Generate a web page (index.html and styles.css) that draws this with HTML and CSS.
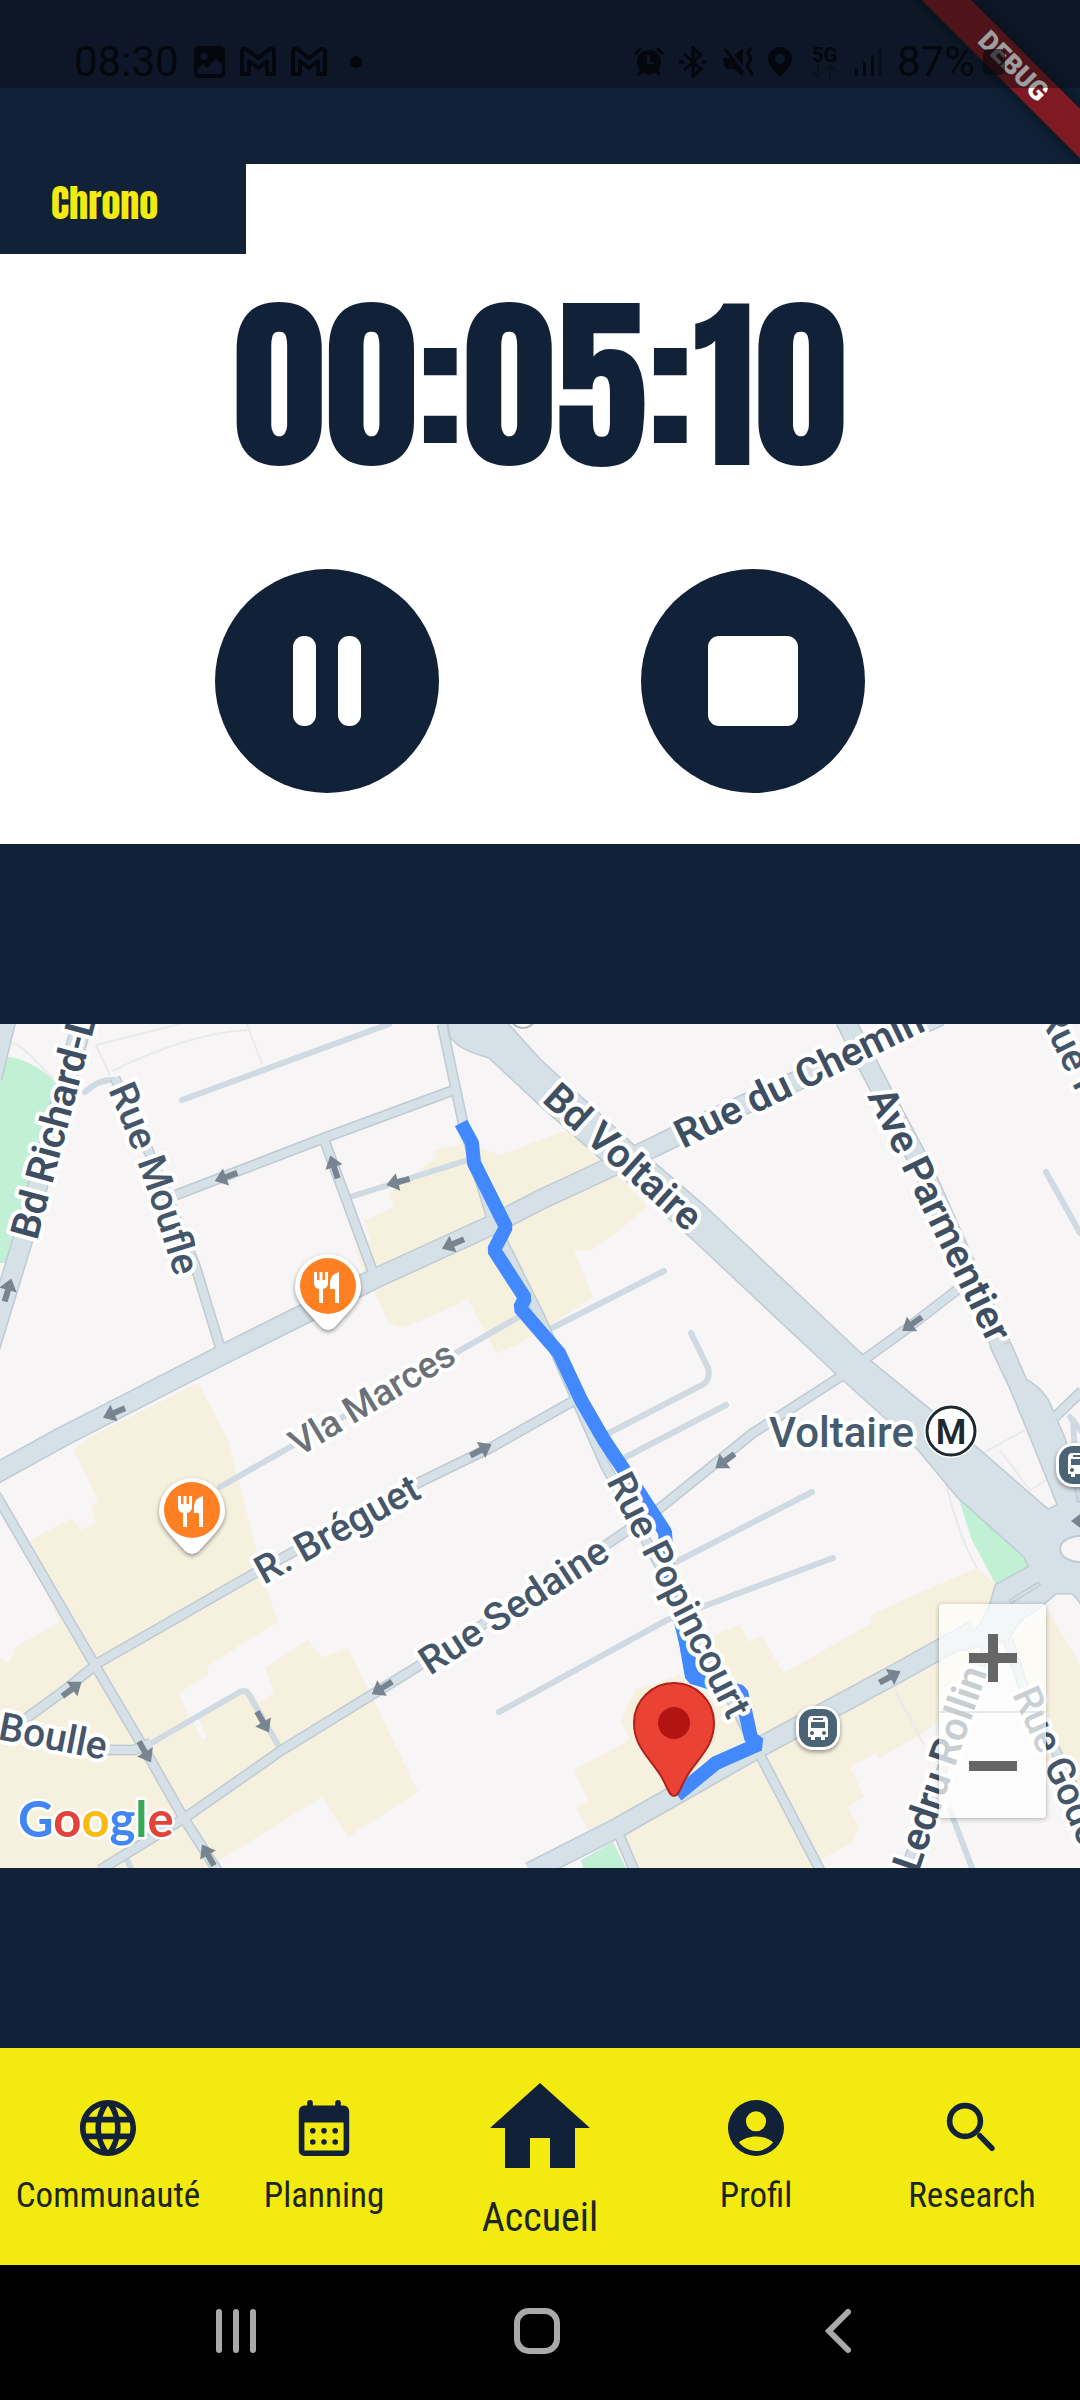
FILE: index.html
```html
<!DOCTYPE html>
<html lang="fr">
<head>
<meta charset="utf-8">
<meta name="viewport" content="width=device-width, initial-scale=1">
<title>Chrono</title>
<link rel="stylesheet" href="styles.css">
</head>
<body>
<header class="top">
  <div class="ribbon">DEBUG</div>
  <div class="status">
    <div class="status-left">
      <time>08:30</time>
      <svg width="31" height="32" viewBox="0 0 31 32"><path fill-rule="evenodd" d="M5 0h21a5 5 0 0 1 5 5v22a5 5 0 0 1-5 5H5a5 5 0 0 1-5-5V5a5 5 0 0 1 5-5zM10 7a3.500 3.500 0 1 0 .01 0zM3 24v2q0 2 2 2h21q2 0 2-2v-7l-6-6-9 9-4-4z"/></svg>
      <svg class="mail" width="36" height="30" viewBox="0 0 36 30"><path d="M2 5q0-4 4-3l12 9 12-9q4-1 4 3v22h-7V14l-9 7-9-7v13H2z"/></svg>
      <svg class="mail" width="36" height="30" viewBox="0 0 36 30"><path d="M2 5q0-4 4-3l12 9 12-9q4-1 4 3v22h-7V14l-9 7-9-7v13H2z"/></svg>
      <span class="dot"></span>
    </div>
    <div class="status-right">
      <svg width="30" height="30" viewBox="0 0 30 30"><path fill-rule="evenodd" d="M15 3a12 12 0 0 1 9 20l3 4-2 2-4-3a12 12 0 0 1-12 0l-4 3-2-2 3-4A12 12 0 0 1 15 3zM13 8v9h7v-2h-4V8z"/><path d="M1 7l6-6M23 1l6 6" stroke="#04080e" stroke-width="3"/></svg>
      <svg width="28" height="32" viewBox="0 0 28 32"><path fill="none" stroke="#04080e" stroke-width="3" d="M5 8l17 15-8 7V2l8 7L5 24M0 16h5M23 16h5"/></svg>
      <svg width="31" height="30" viewBox="0 0 31 30"><path d="M1 11h8l12 13v6l-9-8H5q-4-3-4-11zM12 8l9-7v18z"/><path fill="none" stroke="#04080e" stroke-width="3" d="M3 2l18 24M30 1q-6 4-3 7t0 7 0 7 3 7"/></svg>
      <svg width="24" height="30" viewBox="0 0 24 30"><path fill-rule="evenodd" d="M12 0a12 12 0 0 1 12 12c0 8-12 18-12 18S0 20 0 12A12 12 0 0 1 12 0zm0 7a5 5 0 1 0 .01 0z"/></svg>
      <span class="network">5G<svg width="24" height="14" viewBox="0 0 24 14"><path fill="none" stroke="#09111c" stroke-width="2" d="M6 0v12M1 7l5 6 5-6M18 14V2M13 7l5-6 5 6"/></svg></span>
      <svg width="27" height="28" viewBox="0 0 27 28"><path d="M0 21h3v7H0zM8 14h3v14H8zM16 7h3v21h-3z"/><path opacity=".4" d="M23 0h4v28h-4z"/></svg>
      <span class="battery">87%<svg width="22" height="26" viewBox="0 0 22 26"><rect width="22" height="26" rx="5" opacity=".6"/></svg></span>
    </div>
  </div>
</header>

<main>
  <section class="chrono">
    <h1 class="tab">Chrono</h1>
    <p class="timer">00:05:10</p>
    <div class="controls">
      <button class="round" type="button" aria-label="Pause"><svg width="68" height="90" viewBox="0 0 68 90"><rect width="23" height="90" rx="11"/><rect x="45" width="23" height="90" rx="11"/></svg></button>
      <button class="round" type="button" aria-label="Stop"><svg width="90" height="90" viewBox="0 0 90 90"><rect width="90" height="90" rx="11"/></svg></button>
    </div>
  </section>

  <section class="map" aria-label="Carte">
    <svg class="map-art" viewBox="0 1024 1080 844" preserveAspectRatio="xMidYMid slice">
      <defs>
        <path id="arrow" d="M-12-3H0V-9L12 0 0 9V3H-12z"/>
        <g id="food">
          <path class="pin-shadow" d="M-33 1A33 33 0 1 1 33 1C33 14 24 22 7 41Q0 47-7 41C-24 22-33 14-33 1z"/>
          <circle r="28" fill="#ff8022"/>
          <path fill="#fff" d="M-14-14h3v8h2.500v-8h3v8H-3v-8h3v11q0 5-5 6v14h-4V3q-5-1-5-6zM11-14V17H7V3H2V-4Q3-12 11-14z"/>
        </g>
        <g id="bus">
          <rect x="-22" y="-22" width="44" height="44" rx="17" class="pin-shadow"/>
          <rect x="-19" y="-19" width="38" height="38" rx="14" fill="#4a6375"/>
          <path fill="#fff" fill-rule="evenodd" d="M-6-12H6q4 0 4 5V9H7v3H3V9H-3v3H-7V9h-3V-7q0-5 4-5zM-7-6V0H7V-6zM-6 3a2 2 0 1 0 .01 0zM6 3a2 2 0 1 0 .01 0zM-5-10v2H5v-2z"/>
        </g>
        <path id="p-moufle" d="M108 1090Q142 1165 177 1285"/>
      </defs>
      <rect y="1024" width="1080" height="844" fill="#f7f5f6"/>

      <g fill="#f6f0de">
        <path d="M365 1220L394 1207 389 1193 437 1157 434 1150 465 1143 500 1155 540 1140 568 1130 602 1157 647 1207 620 1230 592 1250 574 1250 593 1297 550 1325 517 1345 496 1353 468 1300 403 1328 389 1323 375 1293 365 1278 356 1250 370 1240z"/>
        <path d="M198 1383L228 1440 275 1622 207 1667 208 1675 179 1693 189 1718 248 1687 260 1703 274 1692 265 1668 308 1640 322 1658 348 1648 418 1792 348 1837 322 1797 220 1860 222 1868H0V1658L10 1663 15 1647 59 1623 31 1540 72 1518 81 1530 96 1523 91 1507 98 1500 74 1450 90 1437z"/>
        <path d="M977 1568L996 1585 991 1603 982 1622 760 1750 588 1830 576 1808 588 1800 573 1770 621 1745 630 1738 621 1722 635 1690 680 1675 715 1700 709 1637 740 1625 748 1642 762 1637 784 1673 872 1623 871 1615 919 1593z"/>
        <path d="M623 1835L762 1755 1000 1632 975 1690 924 1733 879 1758 876 1753 850 1767 864 1797 848 1807 859 1827 853 1842 826 1857 810 1868H636z"/>
        <path d="M1050 1613L1080 1665V1808L1040 1760 1008 1650 1020 1630z"/>
      </g>
      <path fill="#f7f5f6" d="M193 1722l5-3 9 18-5 3z"/>
      <path fill="#f6f0de" d="M198 1383L278 1622 200 1668 90 1440z"/>
      <g fill="#c2f0d5">
        <path d="M0 1057Q25 1054 57 1083L8 1263H0z"/>
        <path d="M958 1497L1025 1557 1029 1567 996 1585 972 1540z"/>
        <path d="M581 1860L613 1842 626 1868H583z"/>
      </g>
      <g class="hair">
        <path d="M0 1042Q15 1038 35 1060L57 1083M96 1045L180 1024M96 1045L110 1075M112 1071Q190 1033 247 1030M247 1024L262 1064M941 1460Q955 1530 977 1568M895 1690L924 1745M985 1452L1025 1430M1000 1450L1030 1490 1055 1475"/>
      </g>

      <g class="alley">
        <path d="M182 1100L389 1024M85 1092Q100 1078 117 1080M350 1197L468 1160M517 1318L220 1487M148 1745L240 1692Q247 1688 252 1700L281 1750M499 1712L667 1620 833 1558M674 1563L812 1492M726 1405L626 1457M691 1333L708 1368Q711 1380 702 1385L609 1433M664 1271L552 1328M1046 1172L1080 1233M950 1810L972 1868M127 1860L131 1868M1070 1417L1082 1432M1073 1420L1078 1506"/>
      </g>
      <g class="road edge">
        <path class="w20" d="M-12 1354L24 1236 82 1024M-8 1078L6 1020"/>
        <path class="w10" d="M115 1078L147 1147 195 1265 221 1350M176 1195L324 1138 454 1090M325 1142L374 1275M442 1024L463 1123 492 1220 540 1317 605 1465 700 1640 760 1755 820 1870M617 1830L634 1870M-4 1495L96 1667 145 1750 183 1817 217 1870M-4 1740L28 1717 65 1690 98 1663 255 1573 420 1482 492 1447 575 1400M107 1750H134L151 1743M957 1290L905 1330 840 1377 753 1433 660 1508 609 1543 417 1667 282 1750 186 1817 100 1870M1055 1417L1082 1391M1008 1640L1022 1683 1080 1800M905 1870L990 1640"/>
        <path class="w20" d="M-5 1474L62 1437 220 1356 374 1279 492 1225 540 1200 654 1147 688 1130 940 1016M975 1630L890 1677 760 1747 619 1827 530 1872M845 1020L881 1090 922 1167 1001 1345"/>
        <path class="shape" d="M448 1020H504L540 1060 633 1145 705 1207 860 1353 979 1450 1048 1510 1058 1505 1029 1433 1010 1387 991 1347 1010 1343 1026 1380Q1045 1390 1052 1410L1065 1440 1077 1503H1090V1610L1080 1602Q1074 1593 1070 1593H1056L1036 1610Q1016 1620 1008 1640L960 1650 982 1622 991 1603 996 1585 1029 1567 1025 1557 958 1497 919 1450 888 1420 836 1373 691 1237 537 1102 489 1057Q460 1050 451 1037z"/>
      </g>
      <g class="road fill">
        <path class="w18" d="M-12 1354L24 1236 82 1024M-8 1078L6 1020"/>
        <path class="w8" d="M115 1078L147 1147 195 1265 221 1350M176 1195L324 1138 454 1090M325 1142L374 1275M442 1024L463 1123 492 1220 540 1317 605 1465 700 1640 760 1755 820 1870M617 1830L634 1870M-4 1495L96 1667 145 1750 183 1817 217 1870M-4 1740L28 1717 65 1690 98 1663 255 1573 420 1482 492 1447 575 1400M107 1750H134L151 1743M957 1290L905 1330 840 1377 753 1433 660 1508 609 1543 417 1667 282 1750 186 1817 100 1870M1055 1417L1082 1391M1008 1640L1022 1683 1080 1800M905 1870L990 1640"/>
        <path class="w18" d="M-5 1474L62 1437 220 1356 374 1279 492 1225 540 1200 654 1147 688 1130 940 1016M975 1630L890 1677 760 1747 619 1827 530 1872M845 1020L881 1090 922 1167 1001 1345"/>
        <path class="shape" d="M448 1020H504L540 1060 633 1145 705 1207 860 1353 979 1450 1048 1510 1058 1505 1029 1433 1010 1387 991 1347 1010 1343 1026 1380Q1045 1390 1052 1410L1065 1440 1077 1503H1090V1610L1080 1602Q1074 1593 1070 1593H1056L1036 1610Q1016 1620 1008 1640L960 1650 982 1622 991 1603 996 1585 1029 1567 1025 1557 958 1497 919 1450 888 1420 836 1373 691 1237 537 1102 489 1057Q460 1050 451 1037z"/>
      </g>
      <ellipse cx="1080" cy="1549" rx="20" ry="13" fill="#f7f5f6" stroke="#bfcbd4" stroke-width="2"/>
      <path d="M1010 1602L1040 1583" stroke="#bfcbd4" stroke-width="5"/><path d="M1011 1601L1039 1584" stroke="#d6e0e7" stroke-width="2"/>
      <circle cx="523" cy="1015" r="13" fill="#fff" stroke="#b8bcc0" stroke-width="2"/>

      <g fill="#78848f">
        <use href="#arrow" transform="translate(226 1177) rotate(160)"/><use href="#arrow" transform="translate(334 1167) rotate(-108)"/>
        <use href="#arrow" transform="translate(398 1182) rotate(165)"/><use href="#arrow" transform="translate(453 1244) rotate(157)"/>
        <use href="#arrow" transform="translate(114 1413) rotate(157)"/><use href="#arrow" transform="translate(8 1290) rotate(-74)"/>
        <use href="#arrow" transform="translate(912 1324) rotate(145)"/><use href="#arrow" transform="translate(725 1461) rotate(143)"/>
        <use href="#arrow" transform="translate(481 1450) rotate(-28)"/><use href="#arrow" transform="translate(382 1688) rotate(148)"/>
        <use href="#arrow" transform="translate(72 1689) rotate(-37)"/><use href="#arrow" transform="translate(263 1722) rotate(60)"/>
        <use href="#arrow" transform="translate(145 1752) rotate(60)"/><use href="#arrow" transform="translate(208 1855) rotate(-120)"/>
        <use href="#arrow" transform="translate(890 1677) rotate(-28)"/><use href="#arrow" transform="translate(1083 1521) rotate(180)"/>
      </g>

      <path class="route" d="M461 1123L472 1143 474 1163 506 1227 494 1250 525 1298 520 1308 559 1353 581 1400 604 1440 642 1497 665 1532 667 1563 686 1643 692 1677 741 1692 751 1738 759 1744 716 1763 677 1795"/>

      <g class="labels">
        <text class="major" transform="translate(37 1241) rotate(-75)">Bd Richard-L</text>
        <text><textPath href="#p-moufle">Rue Moufle</textPath></text>
        <text class="minor" transform="translate(299 1457) rotate(-31)">Vla Marces</text>
        <text transform="translate(264 1585) rotate(-29)">R. Bréguet</text>
        <text transform="translate(430 1676) rotate(-33)">Rue Sedaine</text>
        <text transform="translate(-3 1739) rotate(11)">Boulle</text>
        <text transform="translate(606 1481) rotate(63)">Rue Popincourt</text>
        <text class="major" transform="translate(541 1101) rotate(42)">Bd Voltaire</text>
        <text class="major" transform="translate(683 1149) rotate(-26)">Rue du Chemin</text>
        <text class="major" transform="translate(867 1096) rotate(64)">Ave Parmentier</text>
        <text transform="translate(1038 1014) rotate(64)">Rue F</text>
        <text class="major" transform="translate(918 1874) rotate(-71)">Ledru Rollin</text>
        <text transform="translate(1012 1694) rotate(66)">Rue Gode</text>
        <text class="station" x="769" y="1447">Voltaire</text>
      </g>
      <circle cx="951" cy="1431" r="27" fill="#fff"/><circle cx="951" cy="1431" r="24" fill="#fff" stroke="#20292f" stroke-width="3"/>
      <text class="metro" x="951" y="1444">M</text>
      <use href="#food" x="328" y="1286"/><use href="#food" x="192" y="1510"/>
      <use href="#bus" x="818" y="1728"/><use href="#bus" x="1078" y="1465"/>
      <path fill="#ea4335" stroke="#b3201a" stroke-width="2" d="M634 1723A40 40 0 0 1 714 1723C714 1747 698 1758 687 1776 681 1786 679 1796 674 1796S667 1786 661 1776C650 1758 634 1747 634 1723z"/>
      <circle cx="674" cy="1723" r="16" fill="#b31412"/>
      <text class="google" x="18" y="1837"><tspan fill="#4285f4">G</tspan><tspan fill="#e2443a">o</tspan><tspan fill="#f7bb14">o</tspan><tspan fill="#4285f4">g</tspan><tspan fill="#3aa757">l</tspan><tspan fill="#e2443a">e</tspan></text>
    </svg>
    <div class="zoom">
      <button type="button" aria-label="Zoom avant"><svg width="48" height="48" viewBox="0 0 48 48"><path d="M19 0h10v19h19v10H29v19H19V29H0V19h19z"/></svg></button>
      <button type="button" aria-label="Zoom arrière"><svg width="48" height="48" viewBox="0 0 48 48"><path d="M0 19h48v10H0z"/></svg></button>
    </div>
  </section>
</main>

<nav class="tabs">
  <a href="#communaute"><svg width="56" height="56" viewBox="2 2 20 20"><path d="M11.990 2C6.470 2 2 6.480 2 12s4.470 10 9.990 10C17.520 22 22 17.520 22 12S17.520 2 11.990 2zm6.930 6h-2.950c-.32-1.250-.78-2.450-1.380-3.560 1.840.63 3.370 1.910 4.330 3.560zM12 4.040c.83 1.200 1.480 2.530 1.910 3.960h-3.820c.43-1.430 1.080-2.760 1.910-3.960zM4.260 14C4.100 13.360 4 12.690 4 12s.1-1.360.26-2h3.380c-.08.66-.14 1.320-.14 2s.06 1.340.14 2H4.260zm.82 2h2.950c.32 1.250.78 2.450 1.380 3.560-1.840-.63-3.370-1.900-4.330-3.560zm2.950-8H5.080c.96-1.660 2.490-2.930 4.330-3.560C8.810 5.550 8.350 6.750 8.030 8zM12 19.960c-.83-1.200-1.480-2.530-1.910-3.960h3.820c-.43 1.430-1.080 2.760-1.910 3.960zM14.340 14H9.660c-.09-.66-.16-1.320-.16-2s.07-1.350.16-2h4.680c.09.65.16 1.320.16 2s-.07 1.340-.16 2zm.25 5.560c.6-1.110 1.060-2.310 1.380-3.560h2.950c-.96 1.650-2.490 2.930-4.330 3.560zM16.360 14c.08-.66.14-1.320.14-2s-.06-1.340-.14-2h3.380c.16.64.26 1.310.26 2s-.1 1.360-.26 2h-3.380z"/></svg><span>Communauté</span></a>
  <a href="#planning"><svg width="56" height="56" viewBox="2 2 20 20"><path fill-rule="evenodd" d="M5 4h1V3a1 1 0 0 1 2 0v1h8V3a1 1 0 0 1 2 0v1h1a2 2 0 0 1 2 2v14a2 2 0 0 1-2 2H5a2 2 0 0 1-2-2V6a2 2 0 0 1 2-2zM5 10v10h14V10z"/><circle cx="8" cy="13" r="1"/><circle cx="12" cy="13" r="1"/><circle cx="16" cy="13" r="1"/><circle cx="8" cy="17" r="1"/><circle cx="12" cy="17" r="1"/><circle cx="16" cy="17" r="1"/></svg><span>Planning</span></a>
  <a class="current" href="#accueil" aria-current="page"><svg width="100" height="85" viewBox="2 3 20 17"><path d="M10 20v-6h4v6h5v-8h3L12 3 2 12h3v8z"/></svg><span>Accueil</span></a>
  <a href="#profil"><svg width="56" height="56" viewBox="2 2 20 20"><path fill-rule="evenodd" d="M12 2a10 10 0 1 0 0 20 10 10 0 0 0 0-20zm0 4a3.600 3.600 0 1 1 0 7.200A3.600 3.600 0 0 1 12 6zm0 14.200c-2.500 0-4.700-1.200-6.100-3.100C7.400 15.800 9.700 15 12 15s4.600.8 6.100 2.100c-1.400 1.900-3.600 3.100-6.100 3.100z"/></svg><span>Profil</span></a>
  <a href="#research"><svg width="56" height="56" viewBox="2 2 20 20"><g fill="none" stroke="#112137" stroke-width="2"><circle cx="9.500" cy="9.500" r="5.500"/><path stroke-linecap="round" d="M14.800 14.800l4.300 4.400"/></g></svg><span>Research</span></a>
</nav>

<footer class="system">
  <button type="button" aria-label="Applications récentes"><svg width="40" height="46" viewBox="0 0 40 46"><path d="M3 4v38M20 4v38M37 4v38"/></svg></button>
  <button type="button" aria-label="Accueil du téléphone"><svg width="46" height="46" viewBox="0 0 46 46"><rect x="3" y="3" width="40" height="40" rx="12"/></svg></button>
  <button type="button" aria-label="Retour"><svg width="26" height="46" viewBox="0 0 26 46"><path d="M23 4L4 23l19 19"/></svg></button>
</footer>
</body>
</html>
```
FILE: styles.css
```css
* { box-sizing: border-box; }

body {
  margin: 0;
  min-height: 100vh;
  display: flex;
  flex-direction: column;
  background: #112137;
  color: #112137;
  font-family: Roboto, "Liberation Sans", sans-serif;
}

button {
  border: 0;
  padding: 0;
  display: grid;
  place-items: center;
  cursor: pointer;
}

svg { display: block; }

/* Top: status bar and debug ribbon */
.top {
  position: relative;
  overflow: hidden;
  padding-bottom: 76px;
}

.status {
  position: relative;
  display: flex;
  justify-content: space-between;
  align-items: center;
  height: 88px;
  padding: 36px 75px 0 74px;
  background: rgba(7, 11, 14, 0.4);
  color: #04080e;
  fill: #04080e;
  font-size: 42px;
  line-height: 48px;
}

.status-left,
.status-right {
  display: flex;
  align-items: center;
  gap: 15px;
}

.mail path {
  fill: none;
  stroke: #04080e;
  stroke-width: 4px;
  stroke-linejoin: round;
}

.dot {
  width: 12px;
  height: 12px;
  margin-left: 8px;
  border-radius: 50%;
  background: #04080e;
}

.network {
  margin: 0 3px 0 5px;
  font-size: 20px;
  font-weight: 700;
  line-height: 18px;
}

.battery {
  display: flex;
  align-items: center;
  gap: 8px;
}

.ribbon {
  position: absolute;
  top: 49px;
  right: -73px;
  width: 280px;
  background: #7f1a22;
  box-shadow: 0 0 18px rgba(0, 0, 0, 0.5);
  color: #fff;
  font-size: 27px;
  font-weight: 900;
  line-height: 35px;
  text-align: center;
  transform: rotate(45deg);
}

/* Stopwatch */
.chrono {
  padding-bottom: 51px;
  background: #fff;
}

.tab {
  width: 246px;
  height: 90px;
  margin: 0;
  padding-left: 51px;
  background: #112137;
  color: #f3ea10;
  font-family: Anton, "Liberation Sans Narrow", sans-serif;
  font-size: 38px;
  font-weight: 400;
  line-height: 78px;
}

.timer {
  margin: 28px 0 79px;
  font-family: Anton, "Liberation Sans Narrow", sans-serif;
  font-size: 187px;
  font-weight: 400;
  line-height: 208px;
  text-align: center;
}

.controls {
  display: flex;
  justify-content: center;
  gap: 202px;
}

.round {
  width: 224px;
  height: 224px;
  border-radius: 50%;
  background: #112137;
  fill: #fff;
}

/* Map */
.map {
  position: relative;
  margin: 180px 0;
}

.map-art {
  width: 100%;
  aspect-ratio: 1080 / 844;
}

.hair { fill: none; stroke: #eaeaec; stroke-width: 2px; }
.alley { fill: none; stroke: #d0dae3; stroke-width: 6px; stroke-linecap: round; stroke-linejoin: round; }
.road { fill: none; stroke-linejoin: round; }
.edge { stroke: #bfcbd4; }
.fill { stroke: #d6e0e7; }
.w8 { stroke-width: 8px; }
.w10 { stroke-width: 11px; }
.w18 { stroke-width: 18px; }
.w20 { stroke-width: 21px; }
.edge .shape { stroke-width: 3px; }
.fill .shape { fill: #d6e0e7; stroke: none; }
.route { fill: none; stroke: #4288ff; stroke-width: 14px; stroke-linejoin: bevel; }
.pin-shadow { fill: #fff; filter: drop-shadow(0 2px 2px rgba(0, 0, 0, 0.4)); }

.labels {
  fill: #46566a;
  stroke: #fff;
  stroke-width: 8px;
  stroke-linejoin: round;
  paint-order: stroke;
  font-size: 39px;
  font-weight: 500;
}

.major { fill: #3f4f63; font-size: 40px; font-weight: 600; }
.minor { fill: #6b7177; font-size: 37px; }
.station { fill: #465c6e; font-size: 42px; }
.metro { fill: #20292f; font-size: 35px; font-weight: 600; text-anchor: middle; }

.google {
  stroke: #fff;
  stroke-width: 5px;
  stroke-linejoin: round;
  paint-order: stroke;
  font-family: Lato, sans-serif;
  font-size: 49px;
  font-weight: 700;
}

.zoom {
  position: absolute;
  right: 34px;
  bottom: 50px;
  width: 107px;
  border-radius: 4px;
  background: rgba(255, 255, 255, 0.72);
  box-shadow: 0 1px 5px rgba(0, 0, 0, 0.3);
}

.zoom button {
  width: 100%;
  height: 107px;
  background: none;
  fill: #666;
}

.zoom button + button { border-top: 2px solid rgba(200, 200, 200, 0.4); }

/* Bottom tabs */
.tabs {
  display: flex;
  height: 217px;
  margin-top: auto;
  background: #f3ea0f;
  fill: #112137;
}

.tabs a {
  flex: 1;
  display: flex;
  flex-direction: column;
  align-items: center;
  gap: 20px;
  padding-top: 52px;
  color: #1b2620;
  font-family: "Roboto Condensed", "Liberation Sans Narrow", sans-serif;
  font-size: 35px;
  line-height: 40px;
  text-decoration: none;
}

.tabs .current {
  gap: 26px;
  padding-top: 35px;
  font-size: 40px;
  line-height: 48px;
}

/* Phone navigation */
.system {
  display: flex;
  justify-content: center;
  height: 135px;
  padding: 0 6px 3px 0;
  background: #000;
}

.system button {
  width: 28%;
  background: none;
  fill: none;
  stroke: #a9a9a9;
  stroke-width: 6px;
  stroke-linecap: round;
}
```
